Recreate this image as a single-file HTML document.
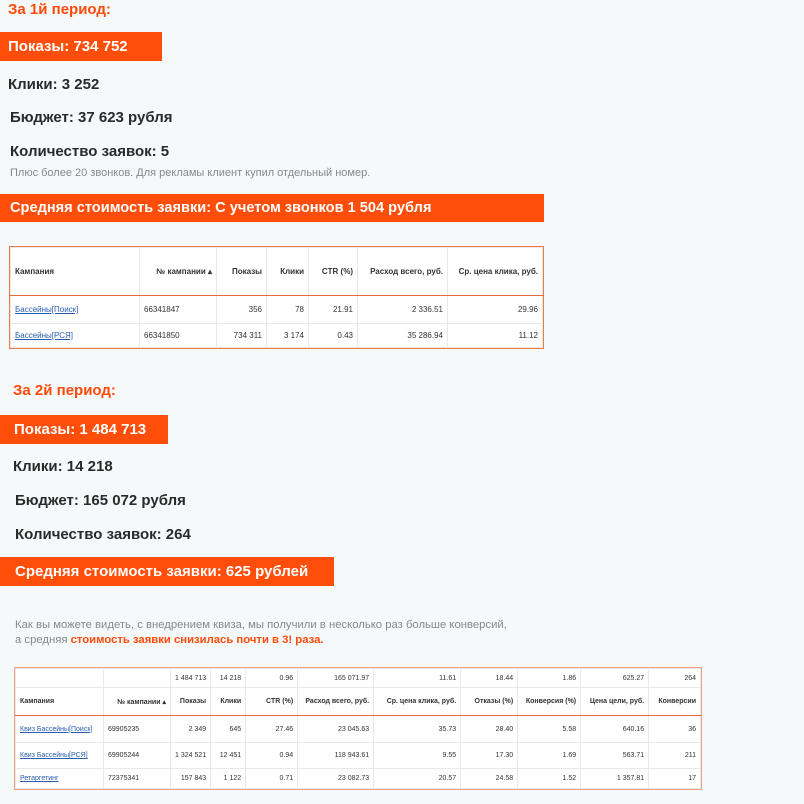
<!DOCTYPE html>
<html><head><meta charset="utf-8"><style>
*{margin:0;padding:0;box-sizing:border-box}
body{width:804px;height:804px;background:#f5f9fa;font-family:"Liberation Sans",sans-serif;position:relative;overflow:hidden;color:#222}
.a{position:absolute;white-space:nowrap}
.h{color:#ff4a0a;font-weight:bold;font-size:15px}
.box{position:absolute;background:#ff4d0a;color:#fff;font-weight:bold;font-size:15px;line-height:29px;white-space:nowrap}
.t{font-size:15px;font-weight:bold;color:#2a2a2a}
.s{font-size:11px;color:#888}
table{position:absolute;border-collapse:collapse;background:#fff;font-size:8px;color:#333;white-space:nowrap}
td{border:1px solid #e8e8e8;text-align:right;padding:0 4px}
th{font-weight:bold;text-align:right;padding:0 4px;border:1px solid #e8e8e8;border-bottom:1.5px solid #e86a3a}
td:first-child,th:first-child{text-align:left}
a{color:#2a5db0;text-decoration:underline}
</style></head><body>
<div class="a h" style="left:8px;top:1px">За 1й период:</div>
<div class="box" style="left:0;top:32px;width:162px;padding-left:8px">Показы: 734 752</div>
<div class="a t" style="left:8px;top:76px">Клики: 3 252</div>
<div class="a t" style="left:10px;top:109px">Бюджет: 37 623 рубля</div>
<div class="a t" style="left:10px;top:143px">Количество заявок: 5</div>
<div class="a s" style="left:10px;top:167px">Плюс более 20 звонков. Для рекламы клиент купил отдельный номер.</div>
<div class="box" style="left:0;top:194px;width:544px;height:28px;line-height:28px;padding-left:10px;font-size:14.6px">Средняя стоимость заявки: С учетом звонков 1 504 рубля</div>

<table style="left:10px;top:247px;width:533px;height:101px;outline:1.5px solid #f07a45">
<tr style="height:48px"><th style="width:129px">Кампания</th><th style="width:77px">№ кампании ▴</th><th style="width:50px">Показы</th><th style="width:42px">Клики</th><th style="width:49px">CTR (%)</th><th style="width:90px">Расход всего, руб.</th><th>Ср. цена клика, руб.</th></tr>
<tr style="height:28px"><td><a>Бассейны[Поиск]</a></td><td style="text-align:left">66341847</td><td>356</td><td>78</td><td>21.91</td><td>2 336.51</td><td>29.96</td></tr>
<tr><td><a>Бассейны[РСЯ]</a></td><td style="text-align:left">66341850</td><td>734 311</td><td>3 174</td><td>0.43</td><td>35 286.94</td><td>11.12</td></tr>
</table>

<div class="a h" style="left:13px;top:382px">За 2й период:</div>
<div class="box" style="left:0;top:415px;width:168px;padding-left:14px">Показы: 1 484 713</div>
<div class="a t" style="left:13px;top:458px">Клики: 14 218</div>
<div class="a t" style="left:15px;top:492px">Бюджет: 165 072 рубля</div>
<div class="a t" style="left:15px;top:526px">Количество заявок: 264</div>
<div class="box" style="left:0;top:557px;width:334px;padding-left:15px">Средняя стоимость заявки: 625 рублей</div>
<div class="a s" style="left:15px;top:619px;font-size:11.3px">Как вы можете видеть, с внедрением квиза, мы получили в несколько раз больше конверсий,</div>
<div class="a s" style="left:15px;top:634px;font-size:11.3px">а средняя <b style="color:#ff4a0a">стоимость заявки снизилась почти в 3! раза.</b></div>

<table style="left:15px;top:668px;width:686px;height:121px;outline:1px solid #f0a080;font-size:7px">
<tr style="height:19px"><td></td><td></td><td>1 484 713</td><td>14 218</td><td>0.96</td><td>165 071.97</td><td>11.61</td><td>18.44</td><td>1.86</td><td>625.27</td><td>264</td></tr>
<tr style="height:28px"><th style="width:88px">Кампания</th><th style="width:67px">№ кампании ▴</th><th style="width:39px">Показы</th><th style="width:35px">Клики</th><th style="width:52px">CTR (%)</th><th style="width:76px">Расход всего, руб.</th><th style="width:87px">Ср. цена клика, руб.</th><th style="width:57px">Отказы (%)</th><th style="width:63px">Конверсия (%)</th><th style="width:68px">Цена цели, руб.</th><th>Конверсии</th></tr>
<tr style="height:27px"><td><a>Квиз Бассейны[Поиск]</a></td><td style="text-align:left">69905235</td><td>2 349</td><td>645</td><td>27.46</td><td>23 045.63</td><td>35.73</td><td>28.40</td><td>5.58</td><td>640.16</td><td>36</td></tr>
<tr style="height:26px"><td><a>Квиз Бассейны[РСЯ]</a></td><td style="text-align:left">69905244</td><td>1 324 521</td><td>12 451</td><td>0.94</td><td>118 943.61</td><td>9.55</td><td>17.30</td><td>1.69</td><td>563.71</td><td>211</td></tr>
<tr><td><a>Ретаргетинг</a></td><td style="text-align:left">72375341</td><td>157 843</td><td>1 122</td><td>0.71</td><td>23 082.73</td><td>20.57</td><td>24.58</td><td>1.52</td><td>1 357.81</td><td>17</td></tr>
</table>
</body></html>
